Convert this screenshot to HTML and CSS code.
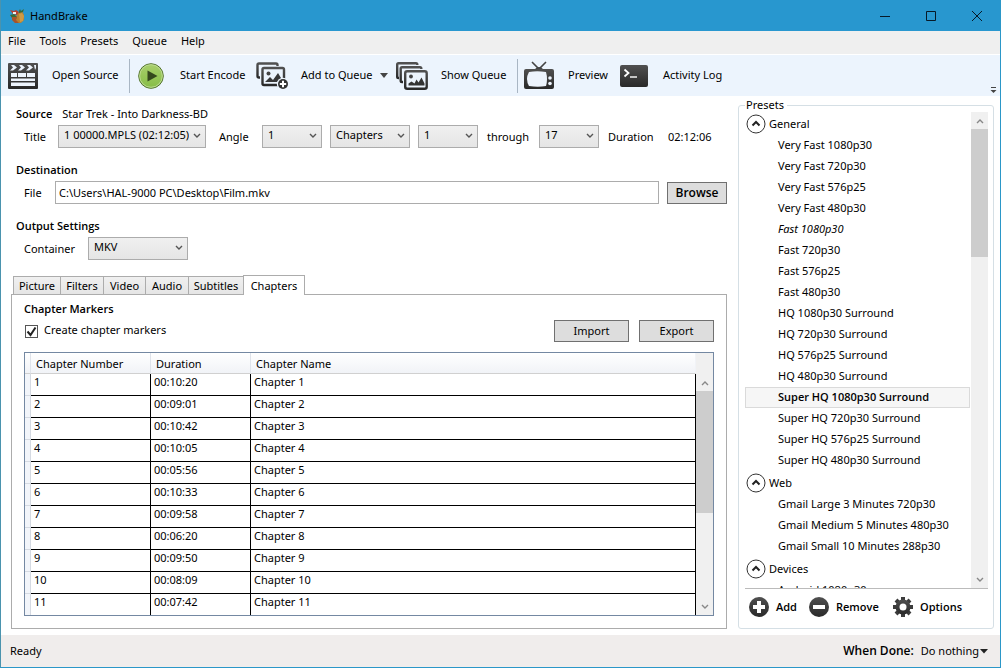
FILE: index.html
```html
<!DOCTYPE html>
<html lang="en">
<head>
<meta charset="utf-8">
<title>HandBrake</title>
<link rel="stylesheet" href="styles.css">
</head>
<body>
<svg class="defs" aria-hidden="true">
  <defs>
    <linearGradient id="dark" x1="0" y1="0" x2="0" y2="1"><stop offset="0" stop-color="#505050"/><stop offset="1" stop-color="#292929"/></linearGradient>
    <linearGradient id="green" x1="0" y1="0" x2="0" y2="1"><stop offset="0" stop-color="#a9cf6c"/><stop offset="1" stop-color="#86bd45"/></linearGradient>
  </defs>
  <symbol id="down" viewBox="0 0 8 6"><path d="M1 1l3 3 3-3" fill="none" stroke="currentColor" stroke-width="1.4"/></symbol>
  <symbol id="up" viewBox="0 0 8 6"><path d="M1 5l3-3 3 3" fill="none" stroke="currentColor" stroke-width="1.4"/></symbol>
  <symbol id="expander" viewBox="0 0 20 20"><circle cx="10" cy="10" r="9" fill="#fff" stroke="#333"/><path d="M6.500 11.500l3.500-3.500 3.500 3.500" fill="none" stroke="#222" stroke-width="2"/></symbol>
</svg>
<div class="window">
  <header class="titlebar">
    <svg class="logo" viewBox="0 0 16 16">
      <path d="M9 5l4-2 2 4v5l-3 3H8l-2-5z" fill="#b9812f"/>
      <path d="M10 6l3-1 2 3-1 5-3 1z" fill="#d09a45"/>
      <path d="M1 2l4 1 2-1 3 2-2 3-4-1z" fill="#b5402e"/>
      <path d="M4 4h3v2H4z" fill="#eee"/>
      <path d="M1 7l4-1 3 3-1 2-4-1z" fill="#3c6b35"/>
      <path d="M3 9h5l-1 3 3 3H6L3 12z" fill="#a6542a"/>
      <path d="M10 3l1-2 1 2 3-2-1 3-4 1z" fill="#396a3b"/>
    </svg>
    <span class="title">HandBrake</span>
    <button class="sys" aria-label="Minimize"><svg viewBox="0 0 12 12"><path d="M1 6.500h10" /></svg></button>
    <button class="sys" aria-label="Maximize"><svg viewBox="0 0 12 12"><path d="M1.500 1.500h9v9h-9z"/></svg></button>
    <button class="sys" aria-label="Close"><svg viewBox="0 0 12 12"><path d="M1 1l10 10M11 1L1 11"/></svg></button>
  </header>
  <nav class="menu">
    <button>File</button><button>Tools</button><button>Presets</button><button>Queue</button><button>Help</button>
  </nav>
  <div class="toolbar">
    <button class="tool open">
      <svg width="30" height="26" viewBox="0 0 30 26"><rect width="30" height="26" rx="1" fill="url(#dark)"/><path d="M3 2h3l3 2.500-4 3H2l3-3zM11 2h3l3 2.500-4 3h-3l3-3zM19 2h3l3 2.500-4 3h-3l3-3zM26 2h2v3l-1 2z" fill="#edf4fd"/><path d="M3 10h6v4H3zM10 10h8v4h-8zM19 10h8v4h-8zM3 15.500h24V18H3zM3 19.500h24V23H3z" fill="#edf4fd"/></svg>
      <span>Open Source</span>
    </button>
    <button class="tool start">
      <svg width="26" height="26" viewBox="0 0 26 26"><circle cx="13" cy="13" r="12.300" fill="url(#green)" stroke="#52702f"/><circle cx="13" cy="13" r="11.300" fill="none" stroke="#bddb92"/><path d="M9.500 7.500v11l10-5.500z" fill="#35481d"/></svg>
      <span>Start Encode</span>
    </button>
    <button class="tool add">
      <svg width="33" height="28" viewBox="0 0 33 28"><g fill="none" stroke="url(#dark)" stroke-width="2.400"><path d="M4 15.500H3q-1.500 0-1.500-1.500V3q0-1.500 1.500-1.500h17q1.500 0 1.500 1.500v1"/><rect x="6.500" y="6" width="21.500" height="17" rx="1.500"/></g><circle cx="12.500" cy="11.500" r="2" fill="#444"/><path d="M9 20l5-5 3 3 5-7 3 5v4z" fill="#383838"/><circle cx="27" cy="22" r="6.200" fill="#ecf4fd"/><circle cx="27" cy="22" r="5" fill="#333"/><path d="M27 18.800v6.400M23.800 22h6.400" stroke="#fff" stroke-width="2"/></svg>
      <span>Add to Queue</span>
      <svg width="8" height="5" viewBox="0 0 8 5"><path d="M0 0h8L4 5z" fill="#444"/></svg>
    </button>
    <button class="tool show">
      <svg width="32" height="28" viewBox="0 0 32 28"><g fill="none" stroke="url(#dark)" stroke-width="2.400"><path d="M3 16H2.500q-1.300 0-1.300-1.300V2.500q0-1.300 1.300-1.300H20q1.300 0 1.300 1.300V3"/><path d="M7 20H6q-1.300 0-1.300-1.300V6.500q0-1.300 1.300-1.300h18q1.300 0 1.300 1.300V7"/><rect x="9.200" y="9.200" width="21.500" height="17.500" rx="2"/></g><circle cx="15" cy="14.500" r="1.900" fill="#444"/><path d="M12.500 23.500v-2l3-2 3 2 2-4 2 3 3-5 3 6v2z" fill="#333"/></svg>
      <span>Show Queue</span>
    </button>
    <button class="tool preview">
      <svg width="30" height="30" viewBox="0 0 30 30"><path d="M8 1l7 7 7-7" fill="none" stroke="#444" stroke-width="1.600"/><path d="M11 8q4-4 8 0z" fill="#444"/><rect y="8" width="30" height="20" rx="2" fill="url(#dark)"/><path d="M5 11q8-1.500 17 0 2 7 0 14-8 1.500-17 0-4-7 0-14z" fill="#edf4fd"/><circle cx="26" cy="17" r="1.800" fill="#edf4fd"/><circle cx="26" cy="22.500" r="1.800" fill="#edf4fd"/></svg>
      <span>Preview</span>
    </button>
    <button class="tool log">
      <svg width="28" height="22" viewBox="0 0 28 22"><rect width="28" height="22" rx="2" fill="url(#dark)"/><path d="M4.500 4.500L8.500 8l-4 3.500" fill="none" stroke="#fff" stroke-width="1.800"/><path d="M10 12h7" stroke="#fff" stroke-width="1.400"/></svg>
      <span>Activity Log</span>
    </button>
    <button class="overflow" aria-label="More"><svg width="7" height="7" viewBox="0 0 7 7"><path d="M1 .5h5" stroke="#444"/><path d="M.5 3h6l-3 3z" fill="#444"/></svg></button>
  </div>
  <main class="main">
    <section class="work">
      <div class="line head"><h2>Source</h2><span>Star Trek - Into Darkness-BD</span></div>
      <div class="line fields">
        <label class="l-title" for="title">Title</label>
        <span class="combo w-title"><select id="title"><option>1 00000.MPLS (02:12:05)</option></select><svg><use href="#down"/></svg></span>
        <label class="l-angle" for="angle">Angle</label>
        <span class="combo w-num"><select id="angle"><option>1</option></select><svg><use href="#down"/></svg></span>
        <span class="combo w-mode"><select aria-label="Range type"><option>Chapters</option></select><svg><use href="#down"/></svg></span>
        <span class="combo w-num"><select aria-label="Range start"><option>1</option></select><svg><use href="#down"/></svg></span>
        <label class="l-through" for="end">through</label>
        <span class="combo w-num"><select id="end"><option>17</option></select><svg><use href="#down"/></svg></span>
        <span class="l-duration">Duration</span><span>02:12:06</span>
      </div>
      <div class="line head"><h2>Destination</h2></div>
      <div class="line fields">
        <label class="l-file" for="file">File</label>
        <input class="path" id="file" type="text" value="C:\Users\HAL-9000 PC\Desktop\Film.mkv">
        <button class="btn browse">Browse</button>
      </div>
      <div class="line head"><h2>Output Settings</h2></div>
      <div class="line fields">
        <label class="l-container" for="container">Container</label>
        <span class="combo w-container"><select id="container"><option>MKV</option></select><svg><use href="#down"/></svg></span>
      </div>
      <div class="tabs" role="tablist">
        <button class="tab t-47" role="tab">Picture</button><button class="tab t-43" role="tab">Filters</button><button class="tab t-42" role="tab">Video</button><button class="tab t-43" role="tab">Audio</button><button class="tab t-55" role="tab">Subtitles</button><button class="tab active" role="tab" aria-selected="true">Chapters</button>
      </div>
      <div class="panel">
        <h2>Chapter Markers</h2>
        <div class="actions">
          <label class="check"><input type="checkbox" checked><svg viewBox="0 0 13 13"><path d="M2.500 6.500l3 3.500 5-7.500" fill="none" stroke="#222" stroke-width="2"/></svg><span>Create chapter markers</span></label>
          <button class="btn">Import</button><button class="btn">Export</button>
        </div>
        <div class="grid">
          <div class="rows">
            <table>
              <thead><tr><th class="c-mark"></th><th class="c-num">Chapter Number</th><th class="c-dur">Duration</th><th>Chapter Name</th></tr></thead>
              <tbody>
                <tr><td></td><td>1</td><td>00:10:20</td><td>Chapter 1</td></tr>
                <tr><td></td><td>2</td><td>00:09:01</td><td>Chapter 2</td></tr>
                <tr><td></td><td>3</td><td>00:10:42</td><td>Chapter 3</td></tr>
                <tr><td></td><td>4</td><td>00:10:05</td><td>Chapter 4</td></tr>
                <tr><td></td><td>5</td><td>00:05:56</td><td>Chapter 5</td></tr>
                <tr><td></td><td>6</td><td>00:10:33</td><td>Chapter 6</td></tr>
                <tr><td></td><td>7</td><td>00:09:58</td><td>Chapter 7</td></tr>
                <tr><td></td><td>8</td><td>00:06:20</td><td>Chapter 8</td></tr>
                <tr><td></td><td>9</td><td>00:09:50</td><td>Chapter 9</td></tr>
                <tr><td></td><td>10</td><td>00:08:09</td><td>Chapter 10</td></tr>
                <tr><td></td><td>11</td><td>00:07:42</td><td>Chapter 11</td></tr>
              </tbody>
            </table>
          </div>
          <div class="scroll grid-scroll"><svg><use href="#up"/></svg><div class="track"><div class="thumb" style="height:59%"></div></div><svg><use href="#down"/></svg></div>
        </div>
      </div>
    </section>
    <fieldset class="presets">
      <legend>Presets</legend>
      <div class="browser">
        <div class="tree">
          <button class="group"><svg><use href="#expander"/></svg>General</button>
          <ul>
            <li>Very Fast 1080p30</li><li>Very Fast 720p30</li><li>Very Fast 576p25</li><li>Very Fast 480p30</li>
            <li class="default">Fast 1080p30</li><li>Fast 720p30</li><li>Fast 576p25</li><li>Fast 480p30</li>
            <li>HQ 1080p30 Surround</li><li>HQ 720p30 Surround</li><li>HQ 576p25 Surround</li><li>HQ 480p30 Surround</li>
            <li class="selected">Super HQ 1080p30 Surround</li><li>Super HQ 720p30 Surround</li><li>Super HQ 576p25 Surround</li><li>Super HQ 480p30 Surround</li>
          </ul>
          <button class="group"><svg><use href="#expander"/></svg>Web</button>
          <ul><li>Gmail Large 3 Minutes 720p30</li><li>Gmail Medium 5 Minutes 480p30</li><li>Gmail Small 10 Minutes 288p30</li></ul>
          <button class="group"><svg><use href="#expander"/></svg>Devices</button>
          <ul><li>Android 1080p30</li></ul>
        </div>
        <div class="scroll"><svg><use href="#up"/></svg><div class="track"><div class="thumb" style="height:29%"></div></div><svg><use href="#down"/></svg></div>
      </div>
      <div class="preset-actions">
        <button class="p-add"><svg viewBox="0 0 20 20"><circle cx="10" cy="10" r="10" fill="url(#dark)"/><path d="M10 4v12M4 10h12" stroke="#fff" stroke-width="4"/></svg>Add</button>
        <button class="p-remove"><svg viewBox="0 0 20 20"><circle cx="10" cy="10" r="10" fill="url(#dark)"/><path d="M4 10h12" stroke="#fff" stroke-width="4"/></svg>Remove</button>
        <button><svg viewBox="0 0 20 20"><g stroke="#3c3c3c" stroke-width="4"><path d="M10 0v20M0 10h20M3 3l14 14M17 3L3 17"/></g><circle cx="10" cy="10" r="7.500" fill="url(#dark)"/><circle cx="10" cy="10" r="3.500" fill="#fff"/></svg>Options</button>
      </div>
    </fieldset>
  </main>
  <footer class="status">
    <span class="ready">Ready</span>
    <b>When Done:</b>
    <button>Do nothing<svg width="8" height="5" viewBox="0 0 8 5"><path d="M0 0h8L4 4.500z" fill="#222"/></svg></button>
  </footer>
</div>
</body>
</html>
```
FILE: styles.css
```css
* { box-sizing: border-box; }
body { margin: 0; font: 11px/14px "Noto Sans", "Open Sans", sans-serif; color: #000; background: #fff; }
button, input, select { font: inherit; color: inherit; }
button { border: 0; padding: 0; background: none; white-space: nowrap; }
h2 { margin: 0; font-size: 11px; line-height: 14px; }
h2, b, .browse, .tree .selected, .preset-actions button { font-family: "Open Sans", "Noto Sans", sans-serif; font-weight: 600; }
svg { flex: none; display: block; }
.defs { position: absolute; width: 0; height: 0; }

.window { display: flex; flex-direction: column; height: 100vh; border: 1px solid #2b97c8; border-left-color: #4a93ae; border-top: 0; }

.titlebar { display: flex; align-items: center; flex: none; height: 31px; padding-left: 8px; background: #2897cf; }
.logo { width: 16px; height: 16px; }
.title { flex: 1; padding-left: 5px; }
.sys { display: grid; place-items: center; width: 46px; height: 31px; }
.sys svg { width: 12px; height: 12px; fill: none; stroke: #071a28; }

.menu { display: flex; flex: none; gap: 14px; height: 23px; padding: 0 7px 4px; background: #efefef; }

.toolbar { display: flex; flex: none; align-items: center; height: 42px; padding: 0 3px 0 7px; border-top: 1px solid #fff; background: #ecf4fd; }
.tool { display: flex; align-items: center; height: 34px; text-align: left; }
.tool span { padding-bottom: 2px; }
.open { gap: 14px; width: 122px; border-right: 1px solid #a9b6c4; }
.start { gap: 16px; width: 126px; padding-left: 8px; }
.add { gap: 7px; width: 140px; }
.add span { padding-left: 5px; }
.show { gap: 13px; width: 122px; border-right: 1px solid #a9b6c4; }
.preview { gap: 14px; width: 102px; padding-left: 6px; }
.log { gap: 15px; }
.overflow { align-self: flex-end; margin-left: auto; padding-bottom: 2px; }

.main { display: flex; flex: 1; gap: 11px; min-height: 0; padding: 0 6px 6px 10px; }
.work { display: flex; flex: 1; flex-direction: column; min-width: 0; padding-top: 11px; }
.line { display: flex; align-items: center; flex: none; }
.head { gap: 10px; height: 14px; margin-bottom: 4px; padding-left: 5px; }
.fields { height: 23px; margin-bottom: 15px; padding-left: 13px; white-space: nowrap; }
.l-title { width: 34px; }
.l-angle { width: 56px; padding-left: 13px; }
.l-through { width: 61px; padding-left: 9px; }
.l-duration { width: 69px; padding-left: 9px; }
.l-file { width: 31px; }
.l-container { width: 64px; }
.combo { position: relative; height: 23px; }
.combo + .combo { margin-left: 8px; }
.combo select { appearance: none; width: 100%; height: 23px; padding: 0 16px 3px 5px; border: 1px solid #acacac; border-radius: 0; background: linear-gradient(#f0f0f0, #e5e5e5); }
.combo svg { position: absolute; right: 5px; top: 8px; width: 8px; height: 6px; color: #555; pointer-events: none; }
.w-title { width: 148px; }
.w-num { width: 60px; }
.w-mode { width: 80px; }
.w-container { width: 100px; }
.path { flex: 1; min-width: 0; height: 23px; padding: 0 3px; border: 1px solid #acacac; background: #fff; }
.btn { width: 75px; height: 22px; border: 1px solid #707070; background: #ddd; }
.browse { width: 60px; margin-left: 8px; font-size: 12px; }

.tabs { display: flex; flex: none; align-items: flex-end; height: 20px; padding-left: 2px; }
.tab { height: 18px; margin-bottom: 1px; border: 1px solid #acacac; border-right: 0; border-bottom: 0; background: linear-gradient(#f0f0f0, #e5e5e5); }
.t-47 { width: 47px; }
.t-43 { width: 43px; }
.t-42 { width: 42px; }
.t-55 { width: 55px; }
.tab.active { z-index: 1; width: 62px; height: 20px; margin-bottom: 0; border-right: 1px solid #acacac; background: #fff; }
.panel { display: flex; flex: 1; flex-direction: column; min-height: 0; margin-top: -1px; padding: 7px 12px 12px; border: 1px solid #acacac; }
.actions { display: flex; gap: 10px; flex: none; margin: 4px 0 10px; }
.check { display: flex; flex: 1; align-items: center; gap: 6px; position: relative; }
.check span { padding-bottom: 2px; }
.check input { appearance: none; width: 13px; height: 13px; margin: 0 0 0 1px; border: 1px solid #555; background: #fff; }
.check svg { position: absolute; left: 1px; width: 13px; height: 13px; pointer-events: none; }
.grid { display: flex; flex: 1; min-height: 0; border: 1px solid #7488a2; background: #f0f0f0; }
.rows { flex: 1; min-width: 0; overflow: hidden; background: #fff; }
table { width: 100%; border-collapse: separate; border-spacing: 0; table-layout: fixed; }
th { height: 21px; padding: 2px 0 0 5px; border-right: 1px solid #dfe3ea; border-bottom: 1px solid #d0d0d0; background: linear-gradient(#fff, #f1f3f7); font-weight: normal; text-align: left; }
th:last-child { border-right-color: #f1f3f7; }
td { height: 22px; padding: 0 3px 6px; border-right: 1px solid #000; border-bottom: 1px solid #000; }
td:first-child { padding: 0; border-right-color: #d5dae2; border-bottom-color: #d5dae2; background: #f2f5fa; }
.c-mark { width: 6px; padding: 0; }
.c-num { width: 120px; }
.c-dur { width: 100px; }

.scroll { display: flex; flex: none; flex-direction: column; align-items: center; width: 17px; background: #f0f0f0; color: #888; }
.scroll svg { width: 8px; height: 6px; margin: 6px 0 5px; }
.track { flex: 1; width: 100%; }
.thumb { background: #cdcdcd; }
.grid-scroll { padding-top: 21px; }

.presets { display: flex; flex-direction: column; width: 256px; min-width: 0; min-height: 0; margin: 2px 0 0; padding: 0 5px 3px 6px; border: 1px solid #d5dfe5; border-radius: 3px; }
.presets legend { margin-left: 0; padding: 0 3px 0 1px; }
.browser { display: flex; flex: 1; min-height: 0; border-bottom: 1px solid #bbb; }
.tree { flex: 1; min-width: 0; overflow: hidden; }
.group { display: flex; align-items: center; gap: 3px; height: 23px; padding-left: 1px; }
.group svg { width: 20px; height: 20px; }
.tree ul { margin: 0; padding: 0; list-style: none; }
.tree li { height: 21px; margin-right: 1px; padding: 2px 0 0 32px; border: 1px solid transparent; white-space: nowrap; }
.tree .default { font-style: italic; }
.tree .selected { border-color: #dadada; background: #f6f6f6; }
.preset-actions { display: flex; flex: none; align-items: center; height: 36px; padding-left: 4px; }
.preset-actions button { display: flex; align-items: center; gap: 7px; }
.preset-actions svg { width: 20px; height: 20px; }
.p-add { width: 60px; }
.p-remove { width: 84px; }

.status { display: flex; flex: none; align-items: center; gap: 7px; height: 32px; padding: 0 12px 0 9px; background: #f0edec; }
.ready { flex: 1; }
.status b { font-size: 12px; }
.status button { display: flex; align-items: center; gap: 1px; }
```
